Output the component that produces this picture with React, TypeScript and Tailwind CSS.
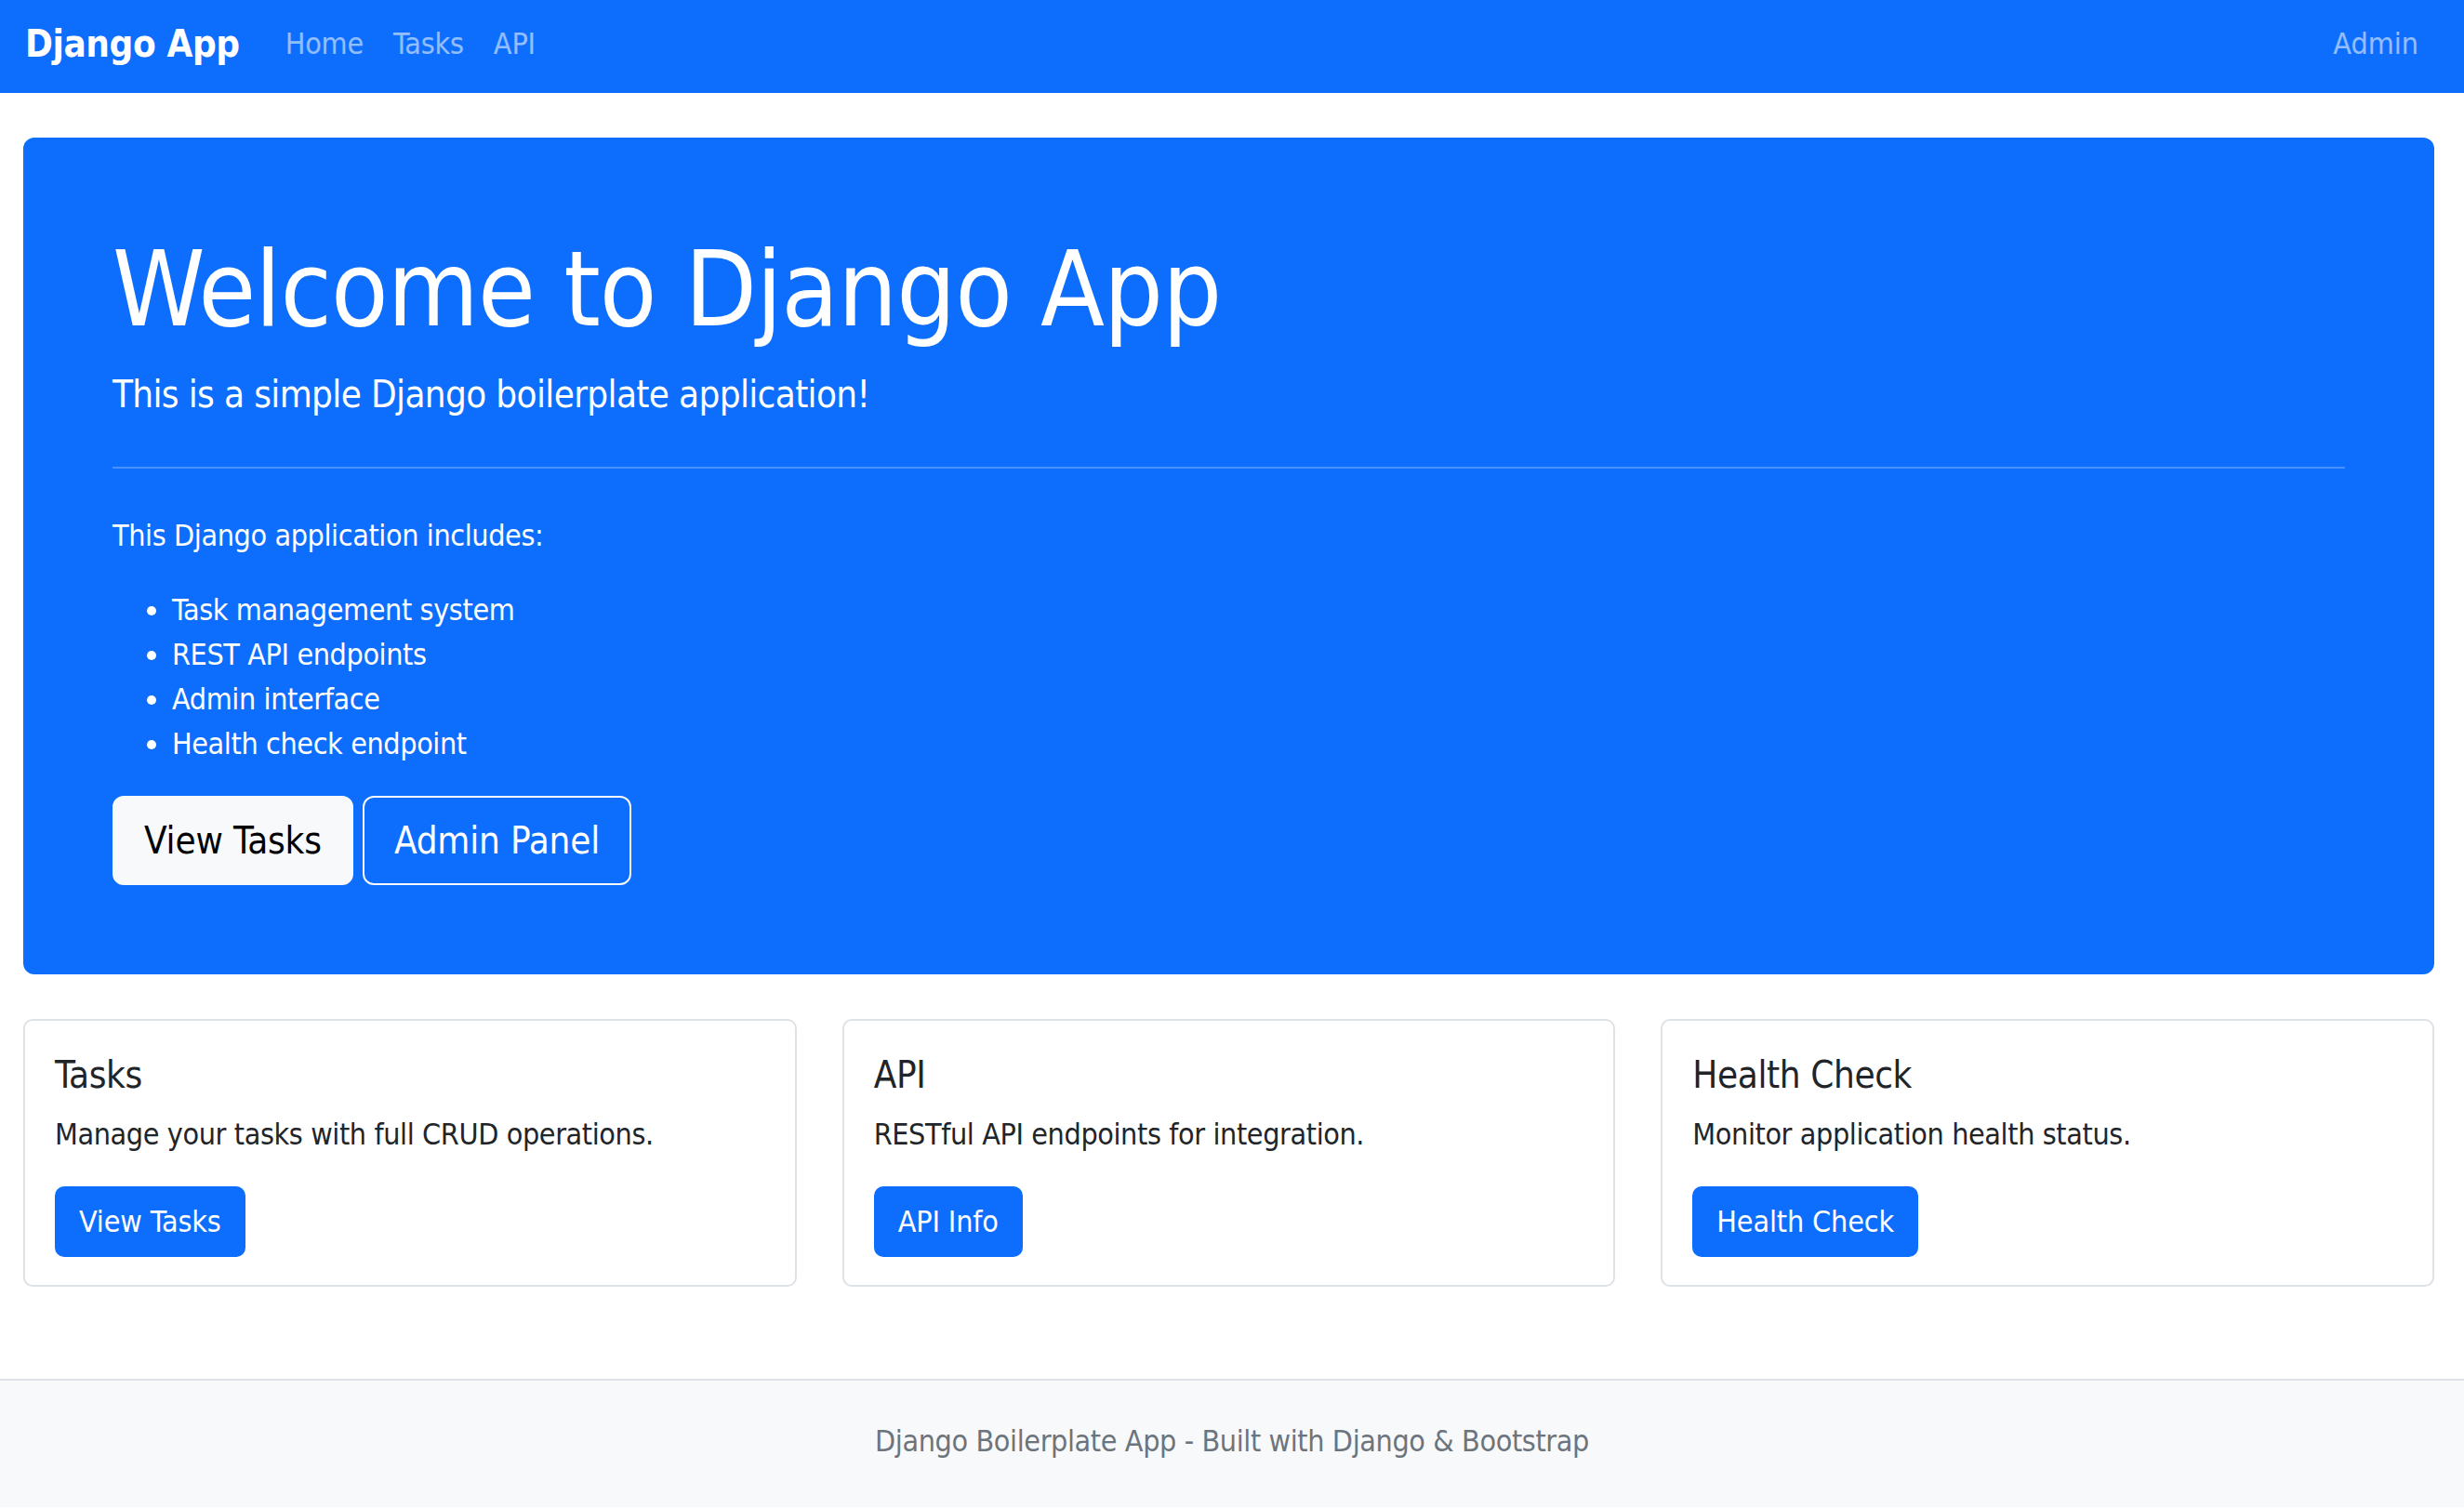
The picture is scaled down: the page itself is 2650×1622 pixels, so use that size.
const NAV_LINKS = ["Home", "Tasks", "API"];

const FEATURES = [
  "Task management system",
  "REST API endpoints",
  "Admin interface",
  "Health check endpoint",
];

const CARDS = [
  { title: "Tasks", text: "Manage your tasks with full CRUD operations.", action: "View Tasks" },
  { title: "API", text: "RESTful API endpoints for integration.", action: "API Info" },
  { title: "Health Check", text: "Monitor application health status.", action: "Health Check" },
];

function Navbar() {
  return (
    <nav className="h-[100px] bg-[#0d6efd] flex items-center pl-[27px] pr-[33px] pb-[6px]">
      <a className="text-[40px] font-bold text-white leading-none mr-[33px]">Django App</a>
      <ul className="flex items-center">
        {NAV_LINKS.map((l) => (
          <li key={l}>
            <a className="block px-[16px] text-[32px] leading-[48px] tracking-[-0.005em] text-white/55">{l}</a>
          </li>
        ))}
      </ul>
      <a className="ml-auto px-[16px] text-[32px] leading-[48px] tracking-normal text-white/55">Admin</a>
    </nav>
  );
}

function Hero() {
  return (
    <section className="bg-[#0d6efd] text-white rounded-[12px] p-[96px] mb-[48px]">
      <h1 className="text-[112px] leading-[1.2] font-normal mb-[16px] tracking-[-0.008em]">Welcome to Django App</h1>
      <p className="text-[40px] leading-[60px] tracking-[-0.016em]">This is a simple Django boilerplate application!</p>
      <hr className="my-[48px] border-0 border-t-2 border-white/25" />
      <p className="mb-[32px]">This Django application includes:</p>
      <ul className="list-disc pl-[64px] mb-[32px]">
        {FEATURES.map((f) => (
          <li key={f}>{f}</li>
        ))}
      </ul>
      <div className="flex gap-[10px]">
        <a className="px-[32px] py-[16px] text-[40px] leading-[60px] tracking-[-0.004em] bg-[#f8f9fa] text-black border-2 border-[#f8f9fa] rounded-[12px]">
          View Tasks
        </a>
        <a className="px-[32px] py-[16px] text-[40px] leading-[60px] tracking-[-0.004em] text-white border-2 border-[#f8f9fa] rounded-[12px]">
          Admin Panel
        </a>
      </div>
    </section>
  );
}

function FeatureCard({ title, text, action }: { title: string; text: string; action: string }) {
  return (
    <div className="border-2 border-[#dee2e6] rounded-[10px] px-[32px] pt-[34px] pb-[30px] bg-white">
      <h5 className="text-[40px] leading-[48px] text-[#212529] mb-[16px]">{title}</h5>
      <p className="text-[#212529] mb-[32px]">{text}</p>
      <a className="inline-block px-[24px] py-[12px] tracking-[-0.004em] bg-[#0d6efd] border-2 border-[#0d6efd] text-white rounded-[10px]">
        {action}
      </a>
    </div>
  );
}

export default function App() {
  return (
    <div className="min-h-screen flex flex-col bg-white text-[32px] leading-[48px] tracking-[-0.012em] text-[#212529] font-['DejaVu_Sans_Condensed','DejaVu_Sans',sans-serif] [font-stretch:condensed]">
      <Navbar />

      <main className="pl-[25px] pr-[32px] pt-[48px]">
        <Hero />

        <div className="grid grid-cols-3 gap-[49px]">
          {CARDS.map((c) => (
            <FeatureCard key={c.title} {...c} />
          ))}
        </div>
      </main>

      <footer className="mt-[99px] bg-[#f8f9fa] border-t-2 border-[#dee2e6] pt-[41px] pb-[47px] text-center text-[#6c757d]">
        Django Boilerplate App - Built with Django &amp; Bootstrap
      </footer>
    </div>
  );
}
